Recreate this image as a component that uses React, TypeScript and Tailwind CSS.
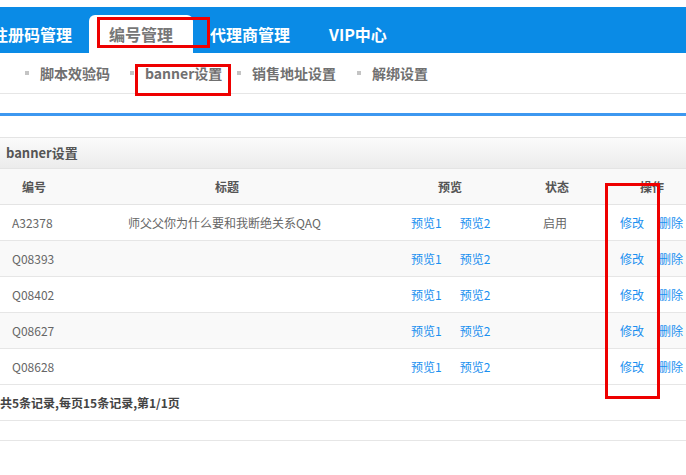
const font = { fontFamily: '"Noto Sans CJK SC", "Liberation Sans", sans-serif' };

const rows = [
  { id: "A32378", title: "师父父你为什么要和我断绝关系QAQ", state: "启用" },
  { id: "Q08393", title: "", state: "" },
  { id: "Q08402", title: "", state: "" },
  { id: "Q08627", title: "", state: "" },
  { id: "Q08628", title: "", state: "" },
];

const subNav = [
  { label: "脚本效验码", w: "w-[105px]" },
  { label: "banner设置", w: "w-[107px]" },
  { label: "销售地址设置", w: "w-[120px]" },
  { label: "解绑设置", w: "w-[100px]" },
];

function SubItem({ label, w }: { label: string; w: string }) {
  return (
    <div className={`flex shrink-0 items-center ${w}`}>
      <span className="h-[4px] w-[4px] bg-[#c4c4c4]" />
      <span className="ml-[11px] text-[14px] font-bold text-[#707070]">{label}</span>
    </div>
  );
}

export default function App() {
  return (
    <div className="relative h-[475px] w-[686px] overflow-hidden bg-white" style={font}>
      {/* top tabs */}
      <div className="mt-[7px] flex h-[46px] items-end bg-[#0a8be6]">
        <div className="ml-[-8px] flex h-[38px] w-[97px] shrink-0 items-center text-[16px] font-bold text-white">注册码管理</div>
        <div className="flex h-[38px] w-[104px] shrink-0 items-center justify-center rounded-t-[6px] bg-white text-[16px] font-bold text-[#777]">
          编号管理
        </div>
        <div className="flex h-[38px] shrink-0 items-center pl-[17px] text-[16px] font-bold text-white">代理商管理</div>
        <div className="flex h-[38px] shrink-0 items-center pl-[39px] text-[16px] font-bold text-white">VIP中心</div>
      </div>

      {/* sub nav */}
      <div className="flex h-[41px] items-center border-b border-[#e6e6e6] pl-[25px]">
        {subNav.map((s) => (
          <SubItem key={s.label} label={s.label} w={s.w} />
        ))}
      </div>

      <div className="mt-[19px] h-[3px] bg-[#3d98f0]" />

      {/* panel */}
      <div className="mt-[21px] border-t border-[#e4e4e4]">
        <div className="flex h-[30px] items-center bg-gradient-to-b from-[#fbfbfb] to-[#ececec] pl-[6px] text-[13px] font-bold text-[#555]">
          banner设置
        </div>
        <div className="flex h-[37px] items-center border-b border-t border-[#e4e4e4] bg-[#f9f9f9] text-[12px] font-bold text-[#555]">
          <div className="w-[100px] shrink-0 pl-[22px]">编号</div>
          <div className="w-[295px] shrink-0 pl-[115px]">标题</div>
          <div className="w-[130px] shrink-0 pl-[43px]">预览</div>
          <div className="w-[75px] shrink-0 pl-[20px]">状态</div>
          <div className="w-[120px] shrink-0 pl-[40px]">操作</div>
        </div>
        {rows.map((r, i) => (
          <div
            key={r.id}
            className={`flex h-[36px] items-center border-b border-[#e6e6e6] text-[12px] text-[#666] ${i % 2 === 1 ? "bg-[#f9f9f9]" : "bg-white"}`}
          >
            <div className="w-[100px] shrink-0 pl-[12px]">{r.id}</div>
            <div className="w-[295px] shrink-0 pl-[28px]">{r.title}</div>
            <div className="flex w-[130px] shrink-0 gap-[18px] pl-[16px] text-[#1a90f0]">
              <span>预览1</span>
              <span>预览2</span>
            </div>
            <div className="w-[75px] shrink-0 pl-[18px]">{r.state}</div>
            <div className="flex w-[120px] shrink-0 gap-[15px] pl-[20px] text-[#1a90f0]">
              <span>修改</span>
              <span>删除</span>
            </div>
          </div>
        ))}
        <div className="flex h-[36px] items-center border-b border-[#e6e6e6] text-[12px] font-bold text-[#444]">
          共5条记录,每页15条记录,第1/1页
        </div>
        <div className="h-[20px] border-b border-[#e6e6e6]" />
      </div>

      {/* annotation boxes */}
      <div className="absolute left-[97px] top-[17px] h-[31px] w-[113px] border-[3px] border-[#ee0000]" />
      <div className="absolute left-[135px] top-[64px] h-[32px] w-[96px] border-[3px] border-[#ee0000]" />
      <div className="absolute left-[605px] top-[183px] h-[216px] w-[55px] border-[3px] border-[#ee0000]" />
    </div>
  );
}
